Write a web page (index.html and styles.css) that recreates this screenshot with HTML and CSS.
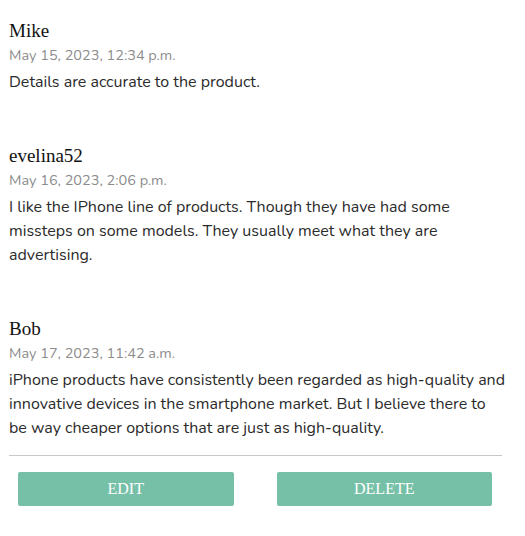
FILE: index.html
```html
<!DOCTYPE html>
<html>
<head>
<meta charset="utf-8">
<link rel="stylesheet" href="styles.css">
</head>
<body>
<div class="comments">
  <div class="list">
    <div class="comment">
      <div class="author">Mike</div>
      <div class="date">May 15, 2023, 12:34 p.m.</div>
      <p class="text">Details are accurate to the product.</p>
    </div>
    <div class="comment">
      <div class="author">evelina52</div>
      <div class="date">May 16, 2023, 2:06 p.m.</div>
      <p class="text">I like the IPhone line of products. Though they have had some missteps on some models. They usually meet what they are advertising.</p>
    </div>
    <div class="comment">
      <div class="author">Bob</div>
      <div class="date">May 17, 2023, 11:42 a.m.</div>
      <p class="text">iPhone products have consistently been regarded as high-quality and innovative devices in the smartphone market. But I believe there to be way cheaper options that are just as high-quality.</p>
    </div>
  </div>
  <hr class="divider">
  <div class="actions">
    <button class="btn">EDIT</button>
    <button class="btn">DELETE</button>
  </div>
</div>
</body>
</html>
```
FILE: styles.css
```css
html, body {
  margin: 0;
  padding: 0;
  background: #fff;
}
.comments {
  width: 493px;
  padding: 19px 0 0 9px;
  font-family: "Nunito", "Open Sans", "Noto Sans", sans-serif;
}
.list {
  display: flex;
  flex-direction: column;
  gap: 50px;
}
.author {
  font-family: "Liberation Serif", "DejaVu Serif", serif;
  font-size: 19px;
  line-height: 24px;
  color: #111;
}
.date {
  font-size: 14.5px;
  line-height: 24px;
  color: #8c8c8c;
}
.text {
  margin: 3px -4px 0 0;
  font-size: 16px;
  line-height: 24px;
  color: #2b2b2b;
}
.divider {
  border: 0;
  border-top: 1px solid #c8c8c8;
  margin: 15px 0 16px;
}
.actions {
  display: flex;
  gap: 43px;
  padding: 0 10px 0 9px;
}
.btn {
  flex: 1;
  height: 34px;
  background: #77c0a8;
  border: 0;
  border-radius: 2px;
  color: #fff;
  font-family: "Liberation Serif", "DejaVu Serif", serif;
  font-size: 16px;
}
```
